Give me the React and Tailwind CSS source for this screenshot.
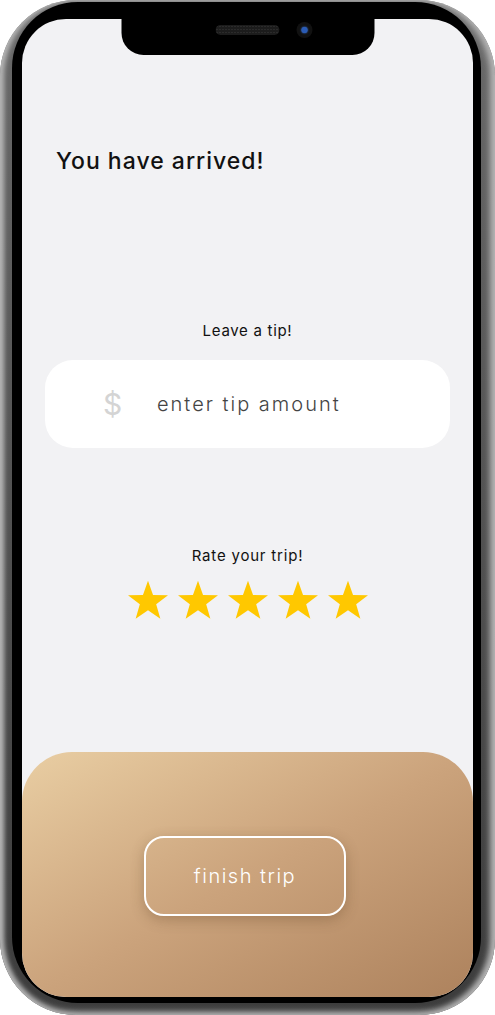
import React, { useState } from 'react';

const Star = ({ filled }) => (
    <svg width="42" height="40" viewBox="0 0 24 23" className="block">
        <polygon
            points="12,0.5 14.9,8.6 23.5,8.7 16.7,14 19.1,22.3 12,17.4 4.9,22.3 7.3,14 0.5,8.7 9.1,8.6"
            fill={filled ? '#FFC800' : '#E2E2E2'}
        />
    </svg>
);

const App = () => {
    const [tip, setTip] = useState('');
    const [rating, setRating] = useState(5);

    return (
        <div
            className="w-[495px] h-[1015px] rounded-[76px] bg-linear-to-b from-[#6a6a6a] to-[#3c3c3c] pt-[2px] pl-[12px] pr-[14px] pb-[12px] shadow-[inset_4px_0_5px_#b5b5b5,inset_-5px_0_6px_#b5b5b5,inset_0_-4px_6px_#8c8c8c]"
            style={{ fontFamily: 'Inter, "Noto Sans", sans-serif' }}
        >
            <div className="w-full h-full rounded-[66px] bg-black pt-[17px] pl-[10px] pr-[8px] pb-[6px]">
                <div className="relative w-full h-full rounded-[44px] bg-[#F2F2F4] overflow-hidden flex flex-col">
                    {/* notch */}
                    <div className="absolute top-0 left-1/2 -translate-x-1/2 w-[253px] h-[36px] bg-black rounded-b-[22px] flex justify-center pt-[6px]">
                        <div className="w-[64px] h-[10px] rounded-full bg-[#1c1c1c] bg-[radial-gradient(#3a3a3a_0.6px,transparent_0.8px)] bg-[length:3px_3px]" />
                        <div className="absolute left-[175px] top-[3px] w-[16px] h-[16px] rounded-full bg-[#111] flex items-center justify-center">
                            <div className="w-[6px] h-[6px] rounded-full bg-[#2a5bb5] shadow-[0_0_2px_#4a8cff]" />
                        </div>
                    </div>

                    <h1 className="mt-[128px] ml-[34px] text-[23px] leading-[28px] font-medium tracking-[1px] text-[#111]">
                        You have arrived!
                    </h1>

                    <p className="mt-[146px] text-center text-[15px] leading-[20px] tracking-[0.7px] text-[#111]">Leave a tip!</p>

                    <label className="mt-[19px] mx-[23px] h-[88px] rounded-[28px] bg-white flex items-center pl-[58px]">
                        <span className="text-[30px] leading-none text-[#d4d4d4] w-[54px]">$</span>
                        <input
                            value={tip}
                            onChange={(e) => setTip(e.target.value)}
                            placeholder="enter tip amount"
                            className="flex-1 min-w-0 bg-transparent outline-none text-[20px] tracking-[2px] font-light text-[#444] placeholder:text-[#444]"
                        />
                    </label>

                    <p className="mt-[98px] text-center text-[15px] leading-[20px] tracking-[0.8px] text-[#111]">Rate your trip!</p>

                    <div className="mt-[14px] flex justify-center gap-[8px]">
                        {[1, 2, 3, 4, 5].map(n => (
                            <button key={n} onClick={() => setRating(n)} className="p-0">
                                <Star filled={n <= rating} />
                            </button>
                        ))}
                    </div>

                    <div className="mt-auto h-[245px] rounded-t-[50px] bg-linear-to-br from-[#E9CEA3] via-[#CBA37C] to-[#AD825D] flex justify-center pt-[84px] pr-[5px]">
                        <button className="w-[202px] h-[80px] rounded-[20px] border-2 border-white text-white text-[20px] tracking-[1.5px] font-light shadow-[0_4px_14px_rgba(90,60,30,0.3)]">
                            finish trip
                        </button>
                    </div>
                </div>
            </div>
        </div>
    );
};

export default App;
